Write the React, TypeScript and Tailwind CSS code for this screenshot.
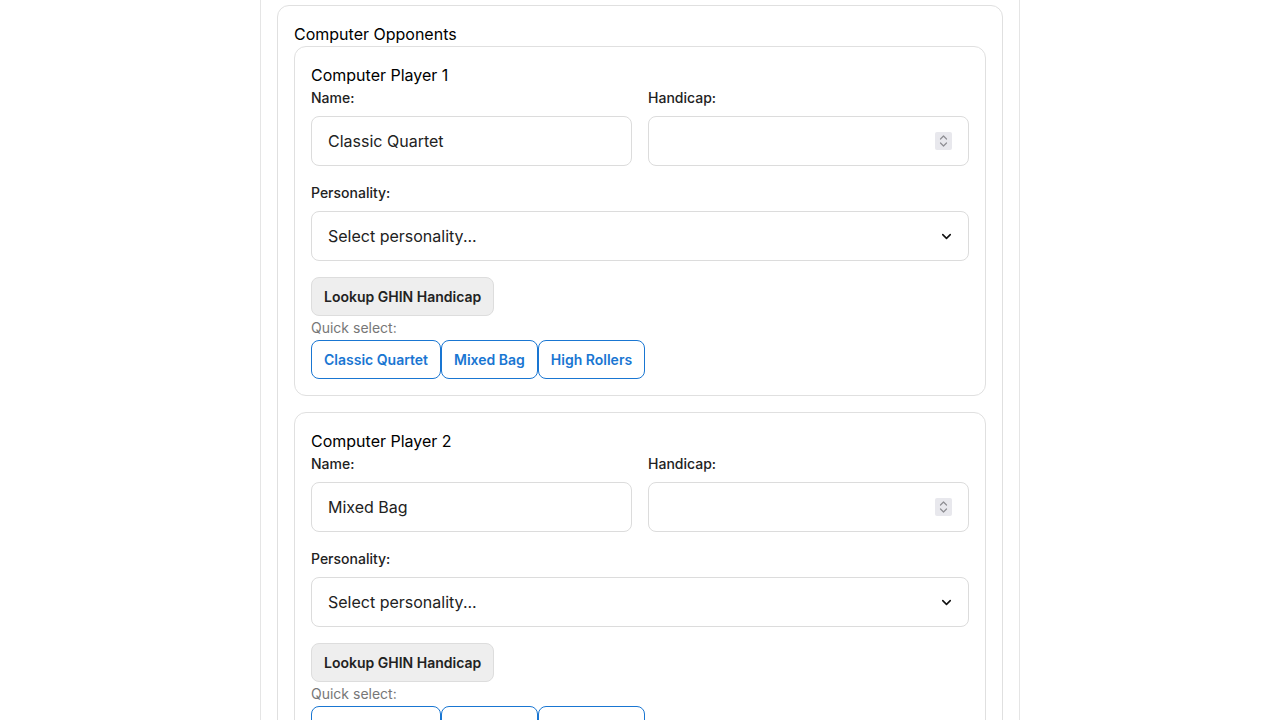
import { ChevronDown } from "lucide-react"

const presets = ["Classic Quartet", "Mixed Bag", "High Rollers"]

function Spinner() {
  return (
    <div className="absolute right-[17px] top-1/2 -translate-y-1/2 w-[17px] h-[18px] bg-[#e8e8ed] rounded-[2px] flex flex-col items-center justify-center">
      <svg width="9" height="14" viewBox="0 0 9 14" fill="none" stroke="#8e8e93" strokeWidth="1.2" strokeLinecap="round" strokeLinejoin="round">
        <path d="M1.5 5 L4.5 2 L7.5 5" />
        <path d="M1.5 9 L4.5 12 L7.5 9" />
      </svg>
    </div>
  )
}

function PlayerCard({ index, name }: { index: number; name: string }) {
  return (
    <div className="border border-[#e0e0e0] rounded-[12px] p-4">
      <div className="text-base leading-6 text-black">Computer Player {index}</div>
      <div className="grid grid-cols-2 gap-4">
        <div>
          <label className="block text-sm leading-5 font-medium text-[#222] mt-[1px] mb-[8px]">Name:</label>
          <input
            type="text"
            defaultValue={name}
            className="w-full h-[50px] border border-[#dcdcdc] rounded-[8px] px-4 text-base text-[#222] outline-none"
          />
        </div>
        <div>
          <label className="block text-sm leading-5 font-medium text-[#222] mt-[1px] mb-[8px]">Handicap:</label>
          <div className="relative">
            <input
              type="text"
              className="w-full h-[50px] border border-[#dcdcdc] rounded-[8px] px-4 text-base text-[#222] outline-none"
            />
            <Spinner />
          </div>
        </div>
      </div>
      <label className="block text-sm leading-5 font-medium text-[#222] mt-[17px] mb-[8px]">Personality:</label>
      <div className="relative h-[50px] border border-[#dcdcdc] rounded-[8px] px-4 flex items-center justify-between">
        <span className="text-base text-[#222]">Select personality...</span>
        <ChevronDown className="w-[15px] h-[15px] text-[#111] -mr-[2px]" strokeWidth={2.5} />
      </div>
      <button className="mt-4 h-[39px] px-3 bg-[#eeeeee] border border-[#dddddd] rounded-[8px] text-sm font-semibold text-[#222]">
        Lookup GHIN Handicap
      </button>
      <div className="mt-[2px] text-sm leading-5 text-[#777]">Quick select:</div>
      <div className="flex mt-[2px]">
        {presets.map((p) => (
          <button
            key={p}
            className="h-[39px] px-3 border border-[#1976d2] rounded-[8px] text-sm font-semibold text-[#1976d2] bg-white"
          >
            {p}
          </button>
        ))}
      </div>
    </div>
  )
}

export default function App() {
  return (
    <div className="min-h-screen bg-white font-['Inter',sans-serif]">
      <div className="w-[760px] mx-auto min-h-screen border-x border-[#e5e5e5] px-4 pt-[5px]">
        <div className="border border-[#e0e0e0] rounded-[12px] px-4 pt-4 pb-4">
          <div className="text-base leading-6 text-black">Computer Opponents</div>
          <div className="space-y-4">
            <PlayerCard index={1} name="Classic Quartet" />
            <PlayerCard index={2} name="Mixed Bag" />
            <PlayerCard index={3} name="High Rollers" />
          </div>
        </div>
      </div>
    </div>
  )
}
